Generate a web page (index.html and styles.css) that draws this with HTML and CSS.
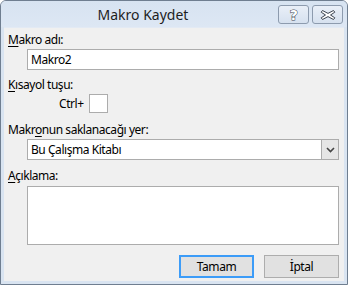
FILE: index.html
```html
<!DOCTYPE html>
<html lang="tr">
<head>
  <meta charset="UTF-8"/>
  <title>Makro Kaydet</title>
  <link rel="stylesheet" href="styles.css">
</head>
<body>
  <div class="window">
    <!-- Titelleiste -->
    <div class="titlebar">
      <div class="title">Makro Kaydet</div>
      <div class="caption-btn help"><span class="glyph">?</span></div>
      <div class="caption-btn close">
        <svg width="16" height="12" viewBox="0 0 16 12">
          <path d="M2.5 1.5 L8 4.4 L13.5 1.5 L14.8 3.2 L10.5 6 L14.8 8.8 L13.5 10.5 L8 7.6 L2.5 10.5 L1.2 8.8 L5.5 6 L1.2 3.2 Z"
                fill="#fff" stroke="#3c4450" stroke-width="1" stroke-linejoin="round"/>
        </svg>
      </div>
    </div>

    <!-- Inhalt -->
    <div class="client">
      <div class="label label-first"><u>M</u>akro adı:</div>
      <input class="field" value="Makro2"/>

      <div class="label label-gap"><u>K</u>ısayol tuşu:</div>
      <div class="shortcut">
        <span>Ctrl+</span>
        <input class="keybox" maxlength="1"/>
      </div>

      <div class="label label-gap2">Makr<u>o</u>nun saklanacağı yer:</div>
      <div class="field combo">
        <span class="combo-text">Bu Çalışma Kitabı</span>
        <span class="combo-btn">
          <svg width="9" height="6" viewBox="0 0 9 6">
            <path d="M1 1 L4.5 4.5 L8 1" fill="none" stroke="#444" stroke-width="1.6"/>
          </svg>
        </span>
      </div>

      <div class="label label-gap3"><u>A</u>çıklama:</div>
      <textarea class="field memo"></textarea>

      <div class="buttons">
        <button class="btn default">Tamam</button>
        <button class="btn">İptal</button>
      </div>
    </div>
  </div>
</body>
</html>
```

FILE: styles.css
```css
body {
  margin: 0;
  font-family: "Noto Sans", "DejaVu Sans", sans-serif;
  font-size: 12px;
  letter-spacing: -0.45px;
  color: #000;
  background: #fff;
}

.window {
  width: 348px;
  height: 285px;
  box-sizing: border-box;
  border: 1px solid #6f7e90;
  border-radius: 6px 6px 0 0;
  background: #d9e4f1;
  padding: 0 3px 3px 3px;
  display: flex;
  flex-direction: column;
  overflow: hidden;
}

.titlebar {
  height: 26px;
  display: flex;
  align-items: flex-start;
  background: linear-gradient(#d7e3f1, #dde7f4);
  margin: 0 -3px;
  padding: 0 4px 0 3px;
}
.title {
  flex: 1;
  text-align: center;
  font-size: 14px;
  letter-spacing: 0;
  line-height: 27px;
  color: #1e1e1e;
  padding-left: 4px;
}
.caption-btn {
  width: 29px;
  height: 17px;
  margin-top: 4px;
  border: 1px solid #8d9bae;
  border-radius: 3px;
  background: linear-gradient(#e9eff8, #d6e1ef);
  display: flex;
  align-items: center;
  justify-content: center;
}
.caption-btn.help { margin-right: 3px; }
.caption-btn .glyph {
  font-family: "DejaVu Sans", sans-serif;
  font-weight: bold;
  font-size: 14px;
  line-height: 14px;
  color: #fff;
  -webkit-text-stroke: 1px #3c4450;
  paint-order: stroke fill;
}

.client {
  flex: 1;
  background: #f0f0f0;
  border-top: 1px solid #e3eaf4;
  padding: 0 5px 0 4px;
  display: flex;
  flex-direction: column;
}

.label {
  line-height: 15px;
  height: 15px;
  white-space: nowrap;
}
.label u { text-underline-offset: 2px; }
.label-first { margin-top: 4px; }
.label-gap { margin-top: 7px; }
.label-gap2 { margin-top: 9px; }
.label-gap3 { margin-top: 8px; }

.field {
  margin: 2px 0 0 19px;
  height: 21px;
  box-sizing: border-box;
  border: 1px solid #acacac;
  background: #fff;
  font: inherit;
  letter-spacing: inherit;
  padding: 0 3px;
  outline: none;
}

.shortcut {
  margin: 2px 0 0 51px;
  display: flex;
  align-items: center;
  gap: 5px;
  height: 19px;
}
.keybox {
  width: 19px;
  height: 19px;
  box-sizing: border-box;
  border: 1px solid #acacac;
  background: #fff;
  padding: 0;
  outline: none;
}

.combo {
  display: flex;
  align-items: center;
  padding: 0 0 0 3px;
}
.combo-text { flex: 1; }
.combo-btn {
  width: 17px;
  height: 19px;
  box-sizing: border-box;
  border-left: 1px solid #acacac;
  background: #e6e6e6;
  display: flex;
  align-items: center;
  justify-content: center;
}

.memo {
  height: 59px;
  resize: none;
  margin-top: 3px;
}

.buttons {
  margin-top: 10px;
  display: flex;
  justify-content: flex-end;
  gap: 10px;
}
.btn {
  width: 75px;
  height: 23px;
  box-sizing: border-box;
  border: 1px solid #adadad;
  background: #e1e1e1;
  font: inherit;
  letter-spacing: inherit;
  color: #000;
  padding: 0;
}
.btn.default {
  border: 1px solid #3c9cf8;
  box-shadow: inset 0 0 0 1px #3c9cf8;
}
```
